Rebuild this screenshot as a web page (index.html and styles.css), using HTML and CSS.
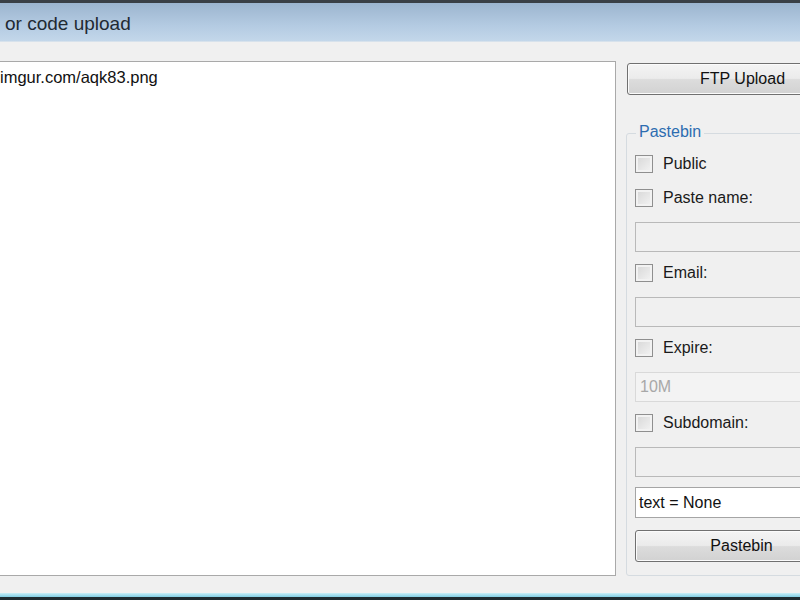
FILE: index.html
```html
<!DOCTYPE html>
<html>
<head>
<meta charset="utf-8">
<link rel="stylesheet" href="styles.css">
</head>
<body>
<div class="window">
  <div class="top-edge"></div>
  <div class="titlebar">or code upload</div>
  <div class="client">
    <div class="editor">imgur.com/aqk83.png</div>
    <div class="side">
      <button class="btn ftp">FTP Upload</button>
      <div class="group">
        <span class="group-title">Pastebin</span>
        <label class="check first"><span class="box"></span>Public</label>
        <label class="check follow"><span class="box"></span>Paste name:</label>
        <div class="field disabled"></div>
        <label class="check"><span class="box"></span>Email:</label>
        <div class="field disabled"></div>
        <label class="check"><span class="box"></span>Expire:</label>
        <div class="field combo">10M</div>
        <label class="check"><span class="box"></span>Subdomain:</label>
        <div class="field disabled"></div>
        <div class="field input">text = None</div>
        <button class="btn paste">Pastebin</button>
      </div>
    </div>
  </div>
  <div class="bottom-glow"></div>
  <div class="bottom-edge"></div>
</div>
</body>
</html>
```

FILE: styles.css
```css
* { box-sizing: border-box; }
html, body {
  margin: 0;
  padding: 0;
  width: 800px;
  height: 600px;
  overflow: hidden;
  background: #f0f0f0;
  font-family: "Liberation Sans", Arial, sans-serif;
  font-size: 16px;
  color: #1a1a1a;
}
.window {
  width: 800px;
  height: 600px;
  display: flex;
  flex-direction: column;
  overflow: hidden;
}
.top-edge {
  height: 3px;
  background: #3a4046;
  flex: none;
}
.titlebar {
  height: 39px;
  flex: none;
  line-height: 41px;
  padding-left: 5px;
  font-size: 19px;
  color: #222a33;
  background: linear-gradient(#9cb5cf, #b4cbe2 60%, #c3d7ea);
  border-bottom: 1px solid #d7e2ec;
}
.client {
  flex: 1;
  display: flex;
  padding-top: 19px;
  background: #f0f0f0;
  min-height: 0;
}
.editor {
  flex: none;
  width: 619px;
  height: 515px;
  margin-left: -3px;
  background: #ffffff;
  border: 1px solid #a9a9a9;
  padding: 6px 0 0 2px;
  font-size: 16.5px;
  line-height: 19px;
  color: #111;
}
.side {
  flex: none;
  width: 240px;
  margin-left: 11px;
  display: flex;
  flex-direction: column;
}
.btn {
  font-family: "Liberation Sans", Arial, sans-serif;
  font-size: 16px;
  color: #111;
  height: 32px;
  border: 1px solid #707070;
  border-radius: 3px;
  background: linear-gradient(#f4f4f4, #ebebeb 48%, #dcdcdc 52%, #d2d2d2);
  box-shadow: inset 0 0 0 1px #fbfbfb;
  padding: 0;
  flex: none;
}
.ftp {
  margin-top: 2px;
  width: 231px;
}
.group {
  margin-top: 38px;
  margin-left: -1px;
  width: 236px;
  border: 1px solid #d5dbe0;
  border-radius: 3px;
  padding: 0 0 13px 8px;
  display: flex;
  flex-direction: column;
  align-items: flex-start;
}
.group-title {
  margin-top: -11px;
  margin-left: 1px;
  padding: 0 3px;
  line-height: 18px;
  background: #f0f0f0;
  color: #2d6db0;
}
.check {
  display: flex;
  align-items: center;
  height: 18px;
  margin-top: 12px;
  line-height: 18px;
}
.check.first { margin-top: 14px; }
.check.follow { margin-top: 16px; }
.box {
  width: 18px;
  height: 18px;
  margin-right: 10px;
  border: 1px solid #8f8f8f;
  background: linear-gradient(135deg, #d6d6d6, #f4f4f4);
  box-shadow: inset 0 0 0 2px #f2f2f2;
  flex: none;
}
.field {
  width: 220px;
  height: 30px;
  margin-top: 15px;
  border: 1px solid #b9b9b9;
  background: #f0f0f0;
  line-height: 28px;
  padding-left: 4px;
}
.field.combo {
  border-color: #d9d9d9;
  background: #f3f3f3;
  color: #a8a8a8;
}
.field.input {
  margin-top: 10px;
  height: 31px;
  border-color: #a5a5a5;
  background: #ffffff;
  color: #111;
  line-height: 29px;
  padding-left: 3px;
}
.paste {
  margin-top: 12px;
  width: 213px;
}
.bottom-glow {
  flex: none;
  height: 4px;
  background: linear-gradient(#c9eef7, #7fcde3);
}
.bottom-edge {
  flex: none;
  height: 3px;
  background: #1d2a30;
}
```
